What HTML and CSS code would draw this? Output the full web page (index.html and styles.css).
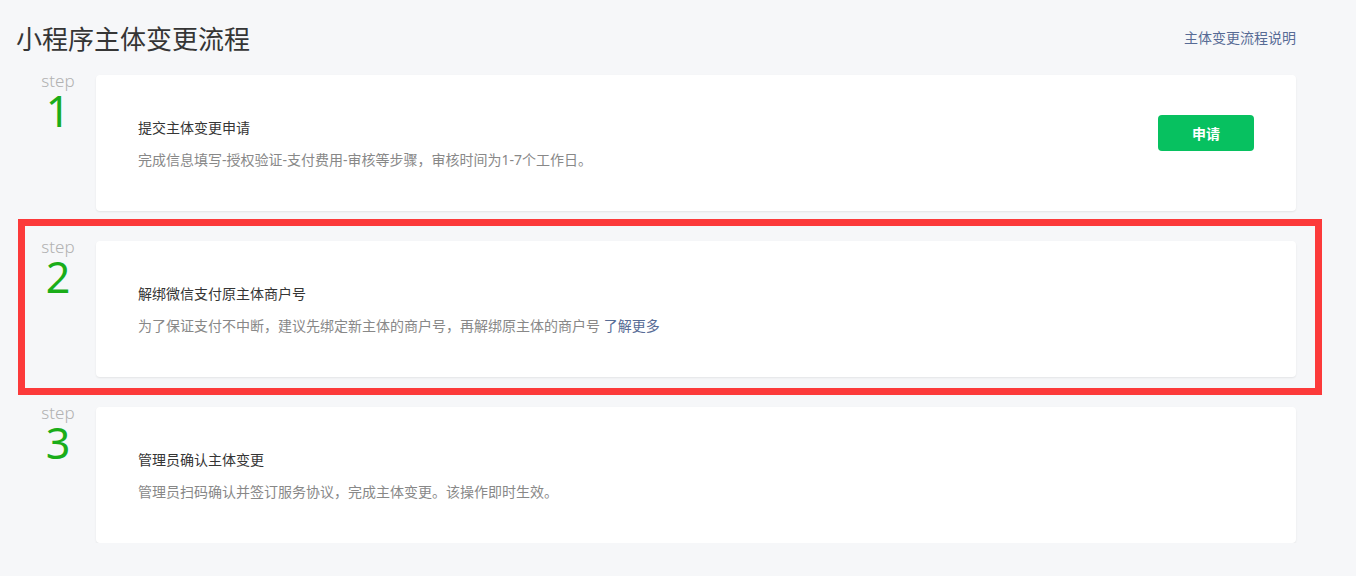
FILE: index.html
```html
<!DOCTYPE html>
<html lang="zh-CN">
<head>
<meta charset="UTF-8">
<meta name="viewport" content="width=device-width, initial-scale=1.0">
<title>小程序主体变更流程</title>
<link rel="stylesheet" href="styles.css">
</head>
<body>
<div class="page-ctnr">
<div class="page-hd">
<h2 class="page-title">小程序主体变更流程</h2>
<a class="page-hd-link" href="#">主体变更流程说明</a>
</div>
<div class="step-list">
<div class="step-item">
<div class="step-index">
<div class="step-index-label">step</div>
<div class="step-index-num">1</div>
</div>
<div class="step-card">
<div class="step-card-info">
<div class="step-card-title">提交主体变更申请</div>
<div class="step-card-desc">完成信息填写-授权验证-支付费用-审核等步骤，审核时间为1-7个工作日。</div>
</div>
<a class="step-card-btn" href="#">申请</a>
</div>
</div>
<div class="step-item">
<div class="step-index">
<div class="step-index-label">step</div>
<div class="step-index-num">2</div>
</div>
<div class="step-card">
<div class="step-card-info">
<div class="step-card-title">解绑微信支付原主体商户号</div>
<div class="step-card-desc">为了保证支付不中断，建议先绑定新主体的商户号，再解绑原主体的商户号 <a class="step-card-link" href="#">了解更多</a></div>
</div>
</div>
<div class="step-highlight"></div>
</div>
<div class="step-item">
<div class="step-index">
<div class="step-index-label">step</div>
<div class="step-index-num">3</div>
</div>
<div class="step-card">
<div class="step-card-info">
<div class="step-card-title">管理员确认主体变更</div>
<div class="step-card-desc">管理员扫码确认并签订服务协议，完成主体变更。该操作即时生效。</div>
</div>
</div>
</div>
</div>
</div>
</body>
</html>
```

FILE: styles.css
```css
html,body{
margin:0px;
padding:0px;
background:#f6f7f9;
color:#353535;
}
*{font-family: "Noto Sans", "Noto Sans CJK SC", sans-serif;}
a{text-decoration: none;}
.page-ctnr{
width: 1280px;
padding: 16px 0px 0px 16px;
}
.page-hd{
display: flex;
align-items: center;
justify-content: space-between;
height: 46px;
}
.page-title{
margin: 0px;
font-size: 26px;
font-weight: 400;
line-height: 46px;
color: #353535;
}
.page-hd-link{
font-size: 14px;
color: #576b95;
margin-bottom: 4px;
}
.step-list{
display: flex;
flex-direction: column;
gap: 30px;
margin-top: 13px;
}
.step-item{
display: flex;
position: relative;
}
.step-index{
width: 76px;
padding-left: 4px;
display: flex;
flex-direction: column;
align-items: center;
}
.step-index-label{
font-size: 17px;
font-weight: 300;
line-height: 14px;
margin-top: -1px;
color: #b2b2b2;
}
.step-index-num{
font-size: 43px;
line-height: 36px;
margin-top: 5px;
color: #1aad19;
}
.step-card{
flex-grow: 1;
display: flex;
align-items: flex-start;
justify-content: space-between;
padding: 42px 42px 40px 42px;
background: #fff;
border-radius: 4px;
box-shadow: 0 1px 2px rgba(0,0,0,0.08);
}
.step-card-title{
font-size: 14px;
line-height: 22px;
color: #353535;
}
.step-card-desc{
font-size: 14px;
line-height: 22px;
margin-top: 10px;
color: #888;
}
.step-card-link{color: #576b95;}
.step-card-btn{
width: 96px;
height: 36px;
margin-top: -2px;
border-radius: 4px;
background: #07c160;
color: #fff;
font-size: 14px;
font-weight: 700;
display: flex;
align-items: center;
justify-content: center;
}
.step-highlight{
position: absolute;
top: -22px;
bottom: -18px;
left: 2px;
right: -26px;
border: 7px solid #fc3a3a;
}
```
